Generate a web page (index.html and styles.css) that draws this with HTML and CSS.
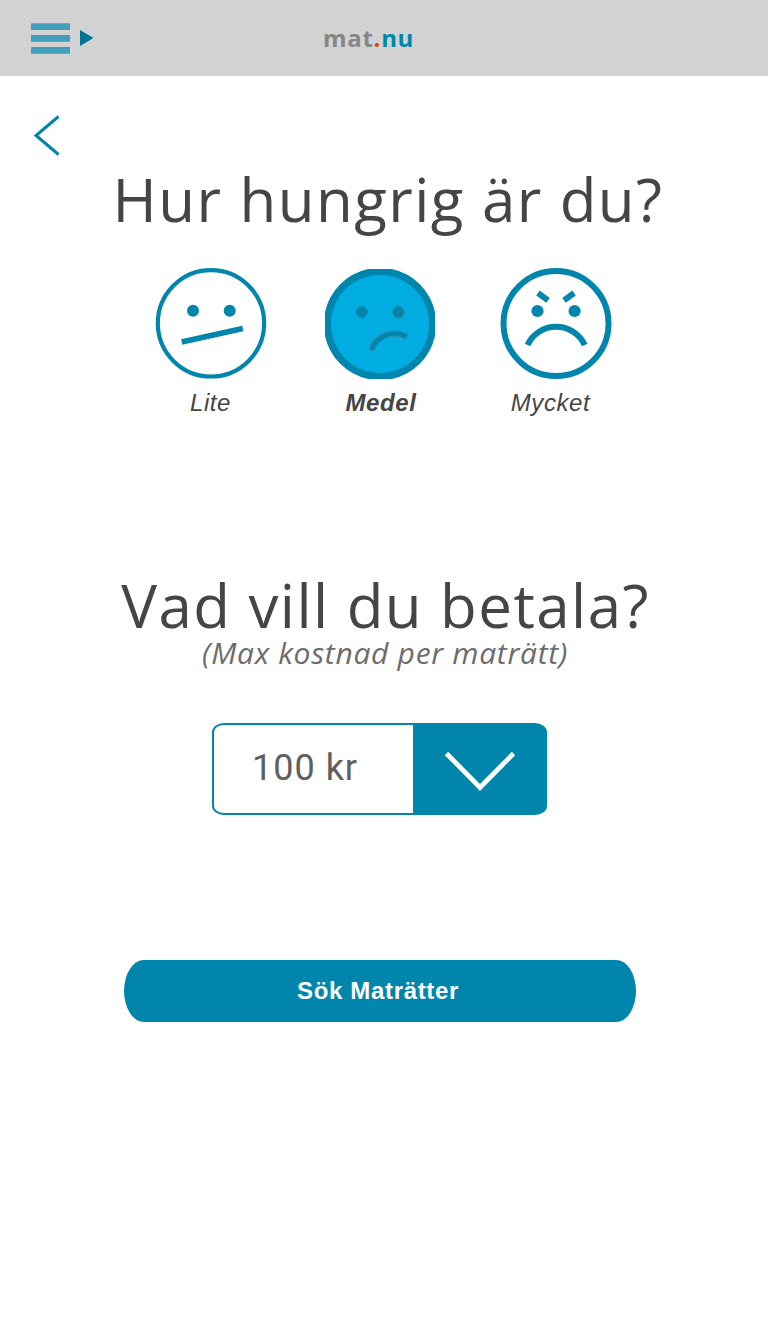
FILE: index.html
```html
<!DOCTYPE html>
<html lang="sv">
  <head>
    <meta charset="UTF-8" />
    <meta name="viewport" content="width=device-width, initial-scale=1.0" />
    <title>mat.nu</title>
    <link rel="stylesheet" href="styles.css">
  </head>
  <body>
    <header class="topbar">
      <a class="menu" href="#">
        <svg width="64" height="32" viewBox="0 0 64 32">
          <path d="M0 0.2H39V7H0ZM0 12H39V18.8H0ZM0 24H39V30.8H0Z" fill="#429fbc" />
          <path d="M49 7L62.5 15L49 23Z" fill="#007496" />
        </svg>
      </a>
      <div class="logo">mat<span class="dot">.</span><span class="nu">nu</span></div>
    </header>
    <nav class="back">
      <a href="#">
        <svg width="28" height="42" viewBox="0 0 28 42">
          <path d="M25.5 1.5L3 20.5L25.5 39.5" fill="none" stroke="#0086ad" stroke-width="3" />
        </svg>
      </a>
    </nav>
    <main>
      <h1 class="hungry-title">Hur hungrig är du?</h1>
      <div class="faces">
        <div class="face">
          <svg width="112" height="112" viewBox="0 0 112 112">
            <circle cx="56" cy="55.3" r="53.2" fill="none" stroke="#0086ad" stroke-width="4.2" />
            <circle cx="38" cy="42.7" r="6" fill="#0086ad" />
            <circle cx="74.7" cy="42.7" r="6" fill="#0086ad" />
            <path d="M26.7 74L87.8 60.5" stroke="#0086ad" stroke-width="5.4" />
          </svg>
          <span>Lite</span>
        </div>
        <div class="face selected">
          <svg width="112" height="112" viewBox="0 0 112 112">
            <path d="M44 1H68A56.5 56.5 0 0 1 111 44V68A56.5 56.5 0 0 1 68 111H44A56.5 56.5 0 0 1 1 68V44A56.5 56.5 0 0 1 44 1Z" fill="#0086ad" />
            <circle cx="56" cy="56" r="49" fill="#00ade2" />
            <circle cx="37.7" cy="44" r="6" fill="#0086ad" />
            <circle cx="74.5" cy="44.2" r="5.9" fill="#0086ad" stroke="#417f91" stroke-width="0.8" />
            <path d="M47.3 82.3A24.5 24.5 0 0 1 82.8 68.8" fill="none" stroke="#417f91" stroke-width="5.8" />
            <path d="M47.8 81.5A24.5 24.5 0 0 1 82.3 68.5" fill="none" stroke="#0086ad" stroke-width="4.2" />
          </svg>
          <span>Medel</span>
        </div>
        <div class="face angry">
          <svg width="112" height="112" viewBox="0 0 112 112">
            <circle cx="56" cy="55.5" r="52.5" fill="none" stroke="#0086ad" stroke-width="6" />
            <circle cx="37.5" cy="43" r="6.1" fill="#0086ad" />
            <circle cx="74.6" cy="43" r="6.1" fill="#0086ad" />
            <path d="M38 25L48 32.3M74 25L64 32.3M27.5 77A31.5 31.5 0 0 1 84.7 77" fill="none" stroke="#0086ad" stroke-width="6" />
          </svg>
          <span>Mycket</span>
        </div>
      </div>
      <h1 class="pay-title">Vad vill du betala?</h1>
      <p class="hint">(Max kostnad per maträtt)</p>
      <div class="price">
        <div class="amount">100 kr</div>
        <div class="arrow">
          <svg width="72" height="42" viewBox="0 0 72 42">
            <path d="M2.5 2.5L36 36.5L69.5 2.5" fill="none" stroke="#fff" stroke-width="4.8" />
          </svg>
        </div>
      </div>
      <button class="search" type="button">Sök Maträtter</button>
    </main>
  </body>
</html>
```
FILE: styles.css
```css
body {
  margin: 0;
  background: #fff;
  color: #444545;
  font-family: "Liberation Sans", Arial, sans-serif;
}
svg {
  display: block;
}
.topbar {
  display: grid;
  grid-template-columns: 323px auto;
  align-items: center;
  height: 76px;
  background: #d2d2d2;
}
.menu {
  padding: 2px 0 0 31px;
}
.logo {
  padding-bottom: 2px;
  color: #868686;
  font-family: "Open Sans", sans-serif;
  font-size: 24px;
  font-weight: 700;
  letter-spacing: 0.7px;
}
.dot {
  color: #dc4405;
}
.nu {
  color: #0086ad;
}
.back {
  display: flex;
  height: 88px;
  padding-left: 33px;
  box-sizing: border-box;
  padding-top: 39px;
}
main {
  display: flex;
  flex-direction: column;
  align-items: center;
}
h1 {
  margin: 0;
  font-family: "Open Sans", sans-serif;
  font-size: 60px;
  font-weight: 400;
  line-height: 70px;
  letter-spacing: 1.45px;
  white-space: nowrap;
}
.hungry-title {
  padding-left: 8px;
}
.faces {
  display: flex;
  gap: 57px;
  margin: 34px 2px 0 0;
}
.face {
  display: flex;
  flex-direction: column;
  align-items: center;
  width: 112px;
}
.face span {
  margin-top: 9px;
  font-size: 24px;
  font-style: italic;
  line-height: 28px;
  letter-spacing: 0.6px;
}
.selected span {
  padding-left: 3px;
  font-weight: 700;
}
.angry {
  margin-left: 7px;
}
.angry span {
  padding-right: 10px;
}
.pay-title {
  padding-left: 3px;
  margin-top: 153px;
}
.hint {
  margin: 0;
  padding-left: 2px;
  color: #6c6c6c;
  font-family: "Open Sans", sans-serif;
  font-size: 30px;
  font-style: italic;
  line-height: 26px;
  letter-spacing: 0.7px;
}
.price {
  display: flex;
  width: 335px;
  height: 92px;
  margin: 57px 9px 0 0;
  box-sizing: border-box;
  border: 2px solid #0086ad;
  border-radius: 12px / 9px;
  background: #0086ad;
}
.amount {
  width: 199px;
  padding-left: 38px;
  box-sizing: border-box;
  border-radius: 10px 0 0 10px / 7px 0 0 7px;
  background: #fff;
  color: #5f5f5f;
  font-family: Roboto, sans-serif;
  font-size: 36px;
  line-height: 86px;
  letter-spacing: 1px;
}
.arrow {
  padding: 26px 0 0 31px;
}
.search {
  width: 512px;
  height: 62px;
  margin: 145px 8px 0 0;
  padding: 0 4px 0 0;
  border: 0;
  border-radius: 20px / 31px;
  background: #0086ad;
  color: #fff;
  font-family: inherit;
  font-size: 24px;
  font-weight: 700;
  letter-spacing: 0.65px;
}
```
